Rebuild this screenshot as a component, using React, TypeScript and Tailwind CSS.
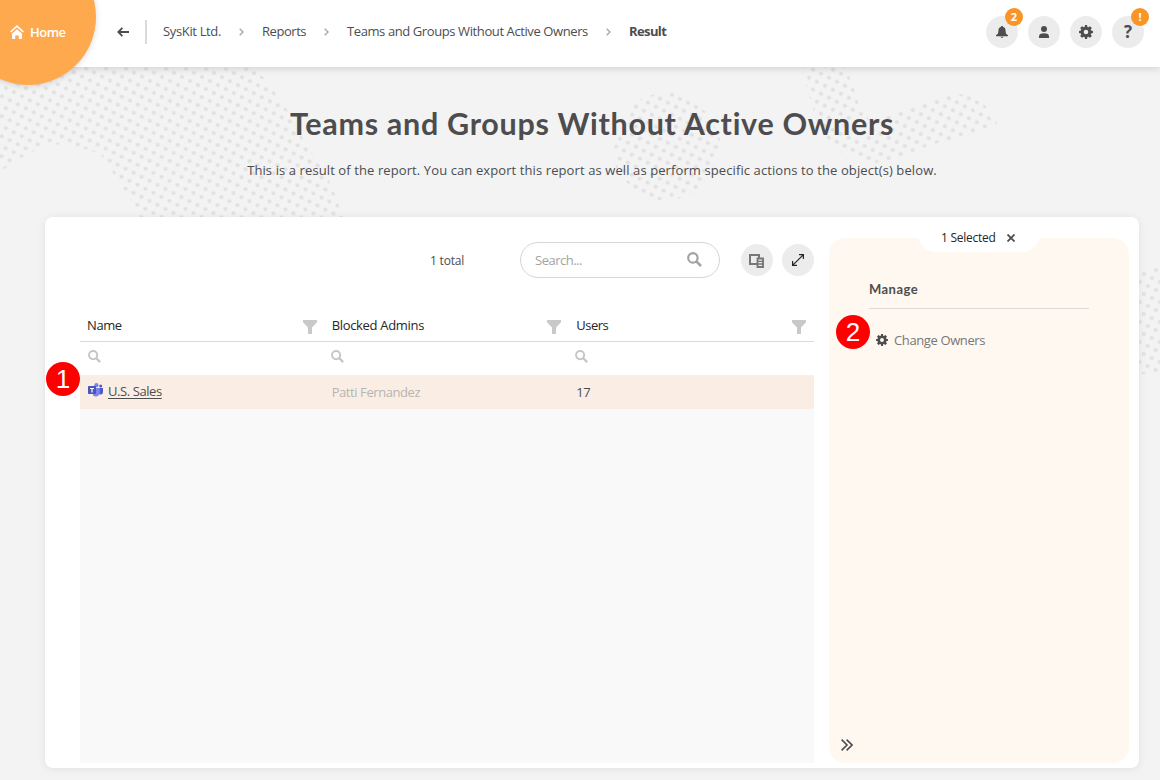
import React from "react";

const TEXT = "font-['Open_Sans','Noto_Sans',sans-serif]";

type DotArea = { id: string; x: number; y: number; d: string };

const dotAreas: DotArea[] = [
  {
    id: "dots-west",
    x: 129.7,
    y: 140.7,
    d: "M0 67H250Q262 72 277 95L290 114L302 137L313 155L325 172L336 196L344 220H139L130 198L118 181L108 165L100 154L82 148L62 144L45 146L28 154L12 164L0 172Z",
  },
  {
    id: "dots-middle",
    x: 648,
    y: 102.7,
    d: "M632 106L641 99L655 94L674 93L692 102L706 112L714 125L720 139L717 162L708 178L694 192L678 199L658 200L638 192L626 182L616 168L613 150L618 138L629 122Z",
  },
  {
    id: "dots-east",
    x: 817,
    y: 81.7,
    d: "M801 67L806 85L812 105L817 122L826 138L840 152L858 159L878 163L900 158L930 145L965 137L985 130L999 126L992 117L985 105L966 94L950 95L930 100L890 113L870 120L860 108L853 85L845 67Z",
  },
  {
    id: "dots-edge",
    x: 1144,
    y: 274,
    d: "M1130 285L1142 270L1160 266V373L1142 374L1130 372Z",
  },
];

function DottedMap() {
  return (
    <svg className="pointer-events-none absolute inset-0" width="1160" height="780" aria-hidden="true">
      <defs>
        {dotAreas.map((a) => (
          <pattern
            key={a.id}
            id={a.id}
            width="8.944"
            height="8.944"
            patternUnits="userSpaceOnUse"
            patternTransform={`translate(${a.x} ${a.y}) rotate(26.8) translate(-4.472 -4.472)`}
          >
            <circle cx="4.472" cy="4.472" r="2.1" fill="#e1e1e1" />
          </pattern>
        ))}
      </defs>
      {dotAreas.map((a) => (
        <path key={a.id} d={a.d} fill={`url(#${a.id})`} />
      ))}
    </svg>
  );
}

function Gear({ size, className }: { size: number; className?: string }) {
  return (
    <svg width={size} height={size} viewBox="0 0 14 14" className={className} fill="currentColor">
      <path
        fillRule="evenodd"
        d="M6 0h2l.4 1.900 1 .4L11 1.200l1.800 1.800-1.100 1.600.4 1L14 6v2l-1.900.4-.4 1 1.100 1.600-1.800 1.800-1.600-1.100-1 .4L8 14H6l-.4-1.900-1-.4L3 12.800 1.200 11l1.100-1.600-.4-1L0 8V6l1.900-.4.4-1L1.200 3 3 1.200l1.600 1.100 1-.4zM7 4.700a2.300 2.300 0 1 0 0 4.600 2.300 2.300 0 0 0 0-4.600z"
      />
    </svg>
  );
}

function Magnifier({ size, className }: { size: number; className?: string }) {
  return (
    <svg width={size} height={size} viewBox="0 0 15 15" className={className} fill="none" stroke="currentColor">
      <circle cx="5.9" cy="5.9" r="4.7" strokeWidth="2.2" />
      <path d="M9.300 9.300L14 14" strokeWidth="2.6" />
    </svg>
  );
}

function Funnel() {
  return (
    <svg width="14" height="14" viewBox="0 0 14 14" fill="#c9c9c9">
      <path d="M0 0h14v2.300L9 7.600V14H5V7.600L0 2.300z" />
    </svg>
  );
}

function Chevron() {
  return (
    <svg width="5" height="8" viewBox="0 0 5 8" fill="none" stroke="#aaa" strokeWidth="1.5">
      <path d="M.7.7L4 4 .7 7.3" />
    </svg>
  );
}

function TeamsLogo() {
  return (
    <svg width="15" height="14" viewBox="0 0 15 14">
      <circle cx="12.7" cy="3" r="1.5" fill="#5059c9" />
      <circle cx="8.4" cy="2.2" r="2.1" fill="#7b83eb" />
      <path d="M10.500 5H15v4.200a2.400 2.400 0 0 1-4.500 1z" fill="#5059c9" />
      <path d="M5 5h6.800v4.600a3.900 3.900 0 0 1-6.800 2.600z" fill="#7b83eb" />
      <rect y="3" width="8" height="8" rx=".7" fill="#4b53bc" />
      <path d="M2 5h4v1H4.600v3.400H3.400V6H2z" fill="#fff" />
    </svg>
  );
}

function HeaderButton({ children, badge }: { children: React.ReactNode; badge?: string }) {
  return (
    <div className="relative flex h-8 w-8 items-center justify-center rounded-full bg-[#ececec] text-[#4d4d4f]">
      {children}
      {badge && (
        <span className="absolute -top-2 left-[19px] flex h-[18px] w-[18px] items-center justify-center rounded-full bg-[#f99527] pb-px text-[11px] leading-none font-bold text-white">
          {badge}
        </span>
      )}
    </div>
  );
}

function Step({ n, className }: { n: number; className: string }) {
  return (
    <div
      className={`absolute flex h-[34px] w-[34px] items-center justify-center rounded-full bg-[#fe0000] font-['Liberation_Sans',Arial,sans-serif] text-[26px] leading-none text-white ${className}`}
    >
      {n}
    </div>
  );
}

function Header() {
  return (
    <header className="relative flex h-[67px] shrink-0 items-start bg-white text-[13px] leading-[18px] text-[#4d4d4f] shadow-[0_1px_8px_rgba(0,0,0,0.16)]">
      <div className="absolute -top-[51px] -left-[40px] h-[136px] w-[136px] rounded-full bg-[#ffa94f] shadow-[0_1px_6px_rgba(0,0,0,0.14)]" />
      <div className="relative flex h-16 w-[117px] items-center pl-[10px] text-white">
        <svg width="14" height="14" viewBox="0 0 14 14">
          <path d="M.6 7L7 1.1 13.4 7" fill="none" stroke="#fff" strokeWidth="1.7" />
          <path d="M7 4.200l5 4.600V14H8.800v-3.600H5.200V14H2V8.800z" fill="#fff" />
        </svg>
        <span className="ml-[6px] text-[13px] font-semibold tracking-[-0.5px]">Home</span>
      </div>
      <nav className="flex h-16 items-center">
        <svg width="12" height="10" viewBox="0 0 12 10" fill="none" stroke="#4d4d4f" strokeWidth="1.8">
          <path d="M12 5H1.500M5.400.8L1.300 5l4.100 4.200" />
        </svg>
        <span className="ml-4 h-6 w-[2px] bg-[#dadada]" />
        <span className="mb-[2px] ml-4 w-[58px] whitespace-nowrap tracking-[-0.35px]">SysKit Ltd.</span>
        <span className="ml-[18px]"><Chevron /></span>
        <span className="mb-[2px] ml-[18px] w-[44px] whitespace-nowrap tracking-[-0.45px]">Reports</span>
        <span className="ml-[18px]"><Chevron /></span>
        <span className="mb-[2px] ml-[18px] w-[241px] whitespace-nowrap tracking-[-0.4px]">Teams and Groups Without Active Owners</span>
        <span className="ml-[18px]"><Chevron /></span>
        <span className="mb-[2px] ml-[18px] whitespace-nowrap font-bold tracking-[-0.6px]">Result</span>
      </nav>
      <div className="mt-4 mr-4 ml-auto flex gap-[10px]">
        <HeaderButton badge="2">
          <svg width="12" height="12" viewBox="0 0 12 12" fill="currentColor">
            <path d="M6 0c.7 0 1.100.4 1.100 1C8.900 1.500 9.600 2.900 9.600 4.700 9.600 7.300 10.500 8.300 12 9.300V10.300H0v-1c1.500-1 2.400-2 2.400-4.600C2.400 2.900 3.100 1.500 4.900 1 4.900.4 5.300 0 6 0zM4.600 10.800h2.800C7.200 11.600 6.700 11.900 6 11.900s-1.200-.3-1.400-1.100z" />
          </svg>
        </HeaderButton>
        <HeaderButton>
          <svg width="10" height="12" viewBox="0 0 10 12" fill="currentColor">
            <circle cx="5" cy="3" r="3" />
            <path d="M0 12V10.300C0 8.200 1.800 7.200 5 7.200s5 1 5 3.100V12z" />
          </svg>
        </HeaderButton>
        <HeaderButton>
          <Gear size={14} />
        </HeaderButton>
        <HeaderButton badge="!">
          <span className="pb-px text-[17px] leading-none font-bold">?</span>
        </HeaderButton>
      </div>
    </header>
  );
}

const columns = [
  { name: "Name", iconOffset: "pl-2", tracking: "tracking-[-0.4px]" },
  { name: "Blocked Admins", iconOffset: "pl-[6px]", tracking: "tracking-[-0.32px]" },
  { name: "Users", iconOffset: "pl-[6px]", tracking: "tracking-[-0.5px]" },
];

function Grid() {
  return (
    <div className="mt-[32px] flex flex-1 flex-col">
      <div className="grid h-[32px] grid-cols-3 border-b border-[#dadada] text-[13px] text-[#262626]">
        {columns.map((c) => (
          <div key={c.name} className="flex items-center justify-between pr-2 pl-[7px]">
            <span className={`whitespace-nowrap ${c.tracking}`}>{c.name}</span>
            <span className="mt-[3px]"><Funnel /></span>
          </div>
        ))}
      </div>
      <div className="grid h-[33px] grid-cols-3 items-center text-[#c6c6c6]">
        {columns.map((c) => (
          <div key={c.name} className={`pb-[4px] ${c.iconOffset}`}>
            <Magnifier size={13} />
          </div>
        ))}
      </div>
      <div className="grid h-[34px] grid-cols-3 items-center bg-[#faeee4] text-[13px] text-[#4d4d4f]">
        <div className="flex items-center pl-2">
          <span className="-mt-[5px]"><TeamsLogo /></span>
          <span className="ml-[5px] whitespace-nowrap tracking-[-0.42px] underline underline-offset-2">U.S. Sales</span>
        </div>
        <div className="pt-[2px] pl-[7px] whitespace-nowrap tracking-[-0.42px] text-[#b8b4b0]">Patti Fernandez</div>
        <div className="pt-[2px] pl-[7px] tracking-[-0.4px]">17</div>
      </div>
      <div className="flex-1 bg-[#f9f9f9]" />
    </div>
  );
}

function SidePanel() {
  return (
    <aside className="mt-[21px] mr-[10px] mb-[5px] ml-[15px] flex w-[300px] shrink-0 flex-col rounded-[16px] bg-[#fff8f1] text-[13px] text-[#4d4d4f]">
      <div className="-mt-[15px] flex h-[29px] w-[122px] items-center self-center rounded-b-[18px] bg-white pl-[23px] text-[12px] text-[#262626]">
        <span className="w-[54px] whitespace-nowrap tracking-[-0.25px]">1 Selected</span>
        <svg className="mt-px ml-[12px]" width="8" height="8" viewBox="0 0 8 8" stroke="#4d4d4f" strokeWidth="1.8">
          <path d="M.5.5l7 7M7.500.5l-7 7" />
        </svg>
      </div>
      <div className="mx-10 mt-[27px] h-[30px] border-b border-[#dadada] font-['Lato',sans-serif] text-[13px] leading-[20px] font-bold tracking-[0.45px]">
        Manage
      </div>
      <div className="mt-[22px] ml-[47px] flex items-center text-[#777]">
        <Gear size={12} className="text-[#4d4d4f]" />
        <span className="-mb-[2px] ml-[6px] whitespace-nowrap tracking-[-0.38px]">Change Owners</span>
      </div>
      <svg className="mt-auto mb-[12px] ml-[12px]" width="12" height="12" viewBox="0 0 12 12" fill="none" stroke="#4d4d4f" strokeWidth="1.6">
        <path d="M.6.6L6 6 .6 11.400M5.600.6L11 6l-5.400 5.400" />
      </svg>
    </aside>
  );
}

function Toolbar() {
  return (
    <div className="mt-[25px] flex h-9 items-center text-[13px]">
      <span className="mt-[2px] ml-[350px] w-[34px] whitespace-nowrap text-[12px] tracking-[-0.2px] text-[#4d4d4f]">1 total</span>
      <div className="ml-[56px] flex h-9 w-[200px] items-center justify-between rounded-full border border-[#d6d6d6] pr-[17px] pl-[14px] text-[#a3a3a3]">
        <span className="mt-[2px] tracking-[-0.5px]">Search...</span>
        <Magnifier size={15} className="-mt-[2px]" />
      </div>
      <div className="ml-[21px] flex h-8 w-8 items-center justify-center rounded-full bg-[#ececec]">
        <svg className="mt-[2px] mr-px" width="15" height="14" viewBox="0 0 15 14" fill="none" stroke="#777">
          <path d="M8 10H1V1h9v3" strokeWidth="2" />
          <path d="M8.500 4.500h5.500v8.500h-5.500z" strokeWidth="1.900" />
          <path d="M9 7.300h4.500M9 10h4.500" strokeWidth="1.300" />
        </svg>
      </div>
      <div className="ml-[9px] flex h-8 w-8 items-center justify-center rounded-full bg-[#ececec]">
        <svg width="12" height="12" viewBox="0 0 12 12" fill="none" stroke="#262626" strokeWidth="1.200">
          <path d="M.8 11.200L11.200.8M7 .6h4.400V5M.6 7v4.400H5" />
        </svg>
      </div>
    </div>
  );
}

export default function App() {
  return (
    <div className={`relative flex h-[780px] w-[1160px] flex-col overflow-hidden bg-[#f3f3f3] ${TEXT}`}>
      <DottedMap />
      <Header />
      <main className="relative flex flex-1 flex-col pb-3">
        <h1 className="mt-[38px] ml-6 text-center font-['Lato',sans-serif] text-[30.5px] leading-[36px] font-bold tracking-[0.7px] whitespace-nowrap text-[#4d4d4f]">
          Teams and Groups Without Active Owners
        </h1>
        <p className="mt-[20px] ml-6 text-center text-[13px] leading-[18px] tracking-[0.1px] whitespace-nowrap text-[#4d4d4f]">
          This is a result of the report. You can export this report as well as perform specific actions to the object(s) below.
        </p>
        <section className="mt-[38px] mr-[21px] ml-[45px] flex flex-1 rounded-lg bg-white shadow-[0_1px_8px_rgba(0,0,0,0.08)]">
          <div className="mb-[5px] ml-[35px] flex w-[734px] flex-col">
            <Toolbar />
            <Grid />
          </div>
          <SidePanel />
        </section>
      </main>
      <Step n={1} className="top-[362px] left-[46px]" />
      <Step n={2} className="top-[315px] left-[836px]" />
    </div>
  );
}
